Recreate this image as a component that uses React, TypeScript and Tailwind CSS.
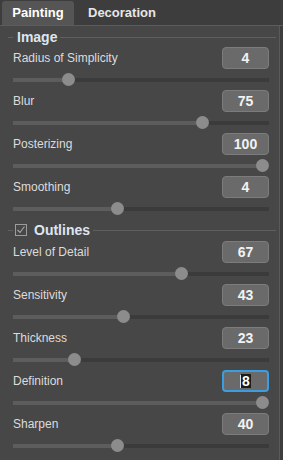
import React from 'react'

interface Param {
  label: string
  value: string
  thumb: number // thumb centre, px from the track's left edge
  focused?: boolean
}

const imageParams: Param[] = [
  { label: 'Radius of Simplicity', value: '4', thumb: 55 },
  { label: 'Blur', value: '75', thumb: 189 },
  { label: 'Posterizing', value: '100', thumb: 249 },
  { label: 'Smoothing', value: '4', thumb: 104 },
]

const outlineParams: Param[] = [
  { label: 'Level of Detail', value: '67', thumb: 168 },
  { label: 'Sensitivity', value: '43', thumb: 110 },
  { label: 'Thickness', value: '23', thumb: 61 },
  { label: 'Definition', value: '8', thumb: 249, focused: true },
  { label: 'Sharpen', value: '40', thumb: 104 },
]

function SectionHeader({ title, checkbox }: { title: string; checkbox?: boolean }) {
  return (
    <div className="flex items-center h-[18px] pl-[8px] pr-[3px]">
      <div className="w-[5px] h-px bg-[#5f5f5f]" />
      {checkbox && (
        <div className="ml-[2px] w-[12px] h-[12px] border border-[#9c9c9c] flex items-center justify-center">
          <svg width="10" height="10" viewBox="0 0 10 10">
            <path d="M1.5 5 L4 7.5 L8.5 1.5" stroke="#a8a8a8" strokeWidth="1.1" fill="none" />
          </svg>
        </div>
      )}
      <span
        className={`${checkbox ? 'ml-[7px]' : 'ml-[4px]'} text-[14px] font-bold text-[#dde6f0] leading-none`}
      >
        {title}
      </span>
      <div className="flex-1 ml-[3px] h-px bg-[#5f5f5f]" />
    </div>
  )
}

function ParamRow({ p }: { p: Param }) {
  return (
    <div className="flex flex-col">
      <div className="flex items-center justify-between h-[22px] pl-[13px] pr-[10px]">
        <span className="text-[12px] text-[#dcdcdc]">{p.label}</span>
        {p.focused ? (
          <div className="w-[47px] h-[22px] rounded-[4px] border-2 border-[#3b9ee0] bg-[#6a6a6a] flex items-center justify-center">
            <span className="w-px h-[13px] bg-[#e0e0e0]" />
            <span className="text-[14px] font-bold text-white bg-[#1b1b1b] leading-[14px] px-px">
              {p.value}
            </span>
          </div>
        ) : (
          <div className="w-[47px] h-[22px] rounded-[4px] border border-[#7c7c7c] bg-[#6a6a6a] flex items-center justify-center text-[14px] font-bold text-[#f2f2f2]">
            {p.value}
          </div>
        )}
      </div>
      <div className="h-[21px] pl-[13px] pr-[10px] flex items-center">
        <div className="relative w-full h-[4px] bg-[#3b3b3b]">
          <div className="absolute left-0 top-0 h-full bg-[#5d5d5d]" style={{ width: p.thumb }} />
          <div
            className="absolute top-1/2 w-[13px] h-[13px] -mt-[6.5px] -ml-[6.5px] rounded-full bg-[#8c8c8c]"
            style={{ left: p.thumb }}
          />
        </div>
      </div>
    </div>
  )
}

export default function App() {
  return (
    <div
      className="w-[283px] h-[460px] bg-[#3d3d3d] flex flex-col overflow-hidden"
      style={{ fontFamily: '"Liberation Sans", Arial, sans-serif' }}
    >
      {/* tabs */}
      <div className="flex items-end h-[26px] border-b border-[#5c5c5c] pl-[2px]">
        <div className="h-[24px] w-[72px] rounded-t-[3px] bg-[#555555] flex items-center justify-center text-[13px] font-bold text-white">
          Painting
        </div>
        <div className="h-[24px] ml-[14px] flex items-center text-[13px] font-bold text-[#e6e6e6]">
          Decoration
        </div>
      </div>

      <div className="flex-1 flex">
        <div className="w-[280px] bg-[#474747] border-r border-[#5a5a5a] flex flex-col pt-[2px]">
          <SectionHeader title="Image" />
          <div className="mt-px flex flex-col">
            {imageParams.map((p) => (
              <ParamRow key={p.label} p={p} />
            ))}
          </div>
          <div className="mt-[2px]">
            <SectionHeader title="Outlines" checkbox />
          </div>
          <div className="mt-[2px] flex flex-col">
            {outlineParams.map((p) => (
              <ParamRow key={p.label} p={p} />
            ))}
          </div>
        </div>
      </div>
    </div>
  )
}
